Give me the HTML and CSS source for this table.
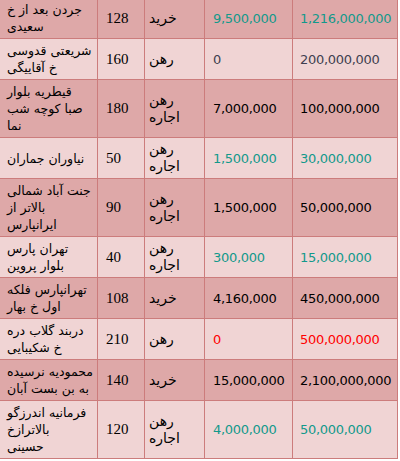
FILE: index.html
```html
<!DOCTYPE html>
<html lang="fa">
<head>
<meta charset="utf-8">
<title>Listings</title>
<link rel="stylesheet" href="styles.css">
</head>
<body>
<div class="sheet">
  <div class="row dark teal">
    <div class="cell loc"><span>جردن بعد از خ<br>سعیدی</span></div>
    <div class="cell area"><span>128</span></div>
    <div class="cell kind"><span>خرید</span></div>
    <div class="cell num"><span>9,500,000</span></div>
    <div class="cell num total"><span>1,216,000,000</span></div>
  </div>
  <div class="row light muted">
    <div class="cell loc"><span>شریعتی قدوسی<br>خ آقاییگی</span></div>
    <div class="cell area"><span>160</span></div>
    <div class="cell kind"><span>رهن</span></div>
    <div class="cell num"><span>0</span></div>
    <div class="cell num total"><span>200,000,000</span></div>
  </div>
  <div class="row dark">
    <div class="cell loc"><span>قیطریه بلوار<br>صبا کوچه شب<br>نما</span></div>
    <div class="cell area"><span>180</span></div>
    <div class="cell kind"><span>رهن<br>اجاره</span></div>
    <div class="cell num"><span>7,000,000</span></div>
    <div class="cell num total"><span>100,000,000</span></div>
  </div>
  <div class="row light teal">
    <div class="cell loc"><span>نیاوران جماران</span></div>
    <div class="cell area"><span>50</span></div>
    <div class="cell kind"><span>رهن<br>اجاره</span></div>
    <div class="cell num"><span>1,500,000</span></div>
    <div class="cell num total"><span>30,000,000</span></div>
  </div>
  <div class="row dark">
    <div class="cell loc"><span>جنت آباد شمالی<br>بالاتر از<br>ایرانپارس</span></div>
    <div class="cell area"><span>90</span></div>
    <div class="cell kind"><span>رهن<br>اجاره</span></div>
    <div class="cell num"><span>1,500,000</span></div>
    <div class="cell num total"><span>50,000,000</span></div>
  </div>
  <div class="row light teal">
    <div class="cell loc"><span>تهران پارس<br>بلوار پروین</span></div>
    <div class="cell area"><span>40</span></div>
    <div class="cell kind"><span>رهن<br>اجاره</span></div>
    <div class="cell num"><span>300,000</span></div>
    <div class="cell num total"><span>15,000,000</span></div>
  </div>
  <div class="row dark">
    <div class="cell loc"><span>تهرانپارس فلکه<br>اول خ بهار</span></div>
    <div class="cell area"><span>108</span></div>
    <div class="cell kind"><span>خرید</span></div>
    <div class="cell num"><span>4,160,000</span></div>
    <div class="cell num total"><span>450,000,000</span></div>
  </div>
  <div class="row light red">
    <div class="cell loc"><span>دربند گلاب دره<br>خ شکیبایی</span></div>
    <div class="cell area"><span>210</span></div>
    <div class="cell kind"><span>رهن</span></div>
    <div class="cell num"><span>0</span></div>
    <div class="cell num total"><span>500,000,000</span></div>
  </div>
  <div class="row dark">
    <div class="cell loc"><span>محمودیه نرسیده<br>به بن بست آبان</span></div>
    <div class="cell area"><span>140</span></div>
    <div class="cell kind"><span>خرید</span></div>
    <div class="cell num"><span>15,000,000</span></div>
    <div class="cell num total"><span>2,100,000,000</span></div>
  </div>
  <div class="row light teal">
    <div class="cell loc"><span>فرمانیه اندرزگو<br>بالاترازخ<br>حسینی</span></div>
    <div class="cell area"><span>120</span></div>
    <div class="cell kind"><span>رهن<br>اجاره</span></div>
    <div class="cell num"><span>4,000,000</span></div>
    <div class="cell num total"><span>50,000,000</span></div>
  </div>
</div>
</body>
</html>
```
FILE: styles.css
```css
html, body {
  margin: 0;
  padding: 0;
  background: #ffffff;
}

.sheet {
  display: flex;
  flex-direction: column;
  gap: 1px;
  width: 397px;
  padding: 1px;
  margin: -3px 0 0 -1px;
  background: #cc7c7c;
}

.row {
  display: grid;
  grid-template-columns: 97px 46px 59px 87px 104px;
  column-gap: 1px;
}

.cell {
  display: flex;
  align-items: center;
  padding: 3px 7px;
  line-height: 17px;
  white-space: nowrap;
  color: #000000;
  font-family: "DejaVu Sans", sans-serif;
  font-size: 12.5px;
}

.dark .cell { background: #dea8a8; }
.light .cell { background: #f0d4d4; }

.loc { padding-left: 7px; }

.area {
  padding-left: 8px;
  font-family: "Liberation Serif", "Times New Roman", serif;
  font-size: 15px;
}

.kind {
  padding-left: 4px;
  font-size: 14px;
}

.num {
  padding-left: 8px;
  font-size: 13px;
  letter-spacing: -0.3px;
}

.total { padding-left: 7px; }

.teal .num { color: #12998b; }
.muted .num { color: #3f3f4f; }
.red .num { color: #ff0000; }
```
